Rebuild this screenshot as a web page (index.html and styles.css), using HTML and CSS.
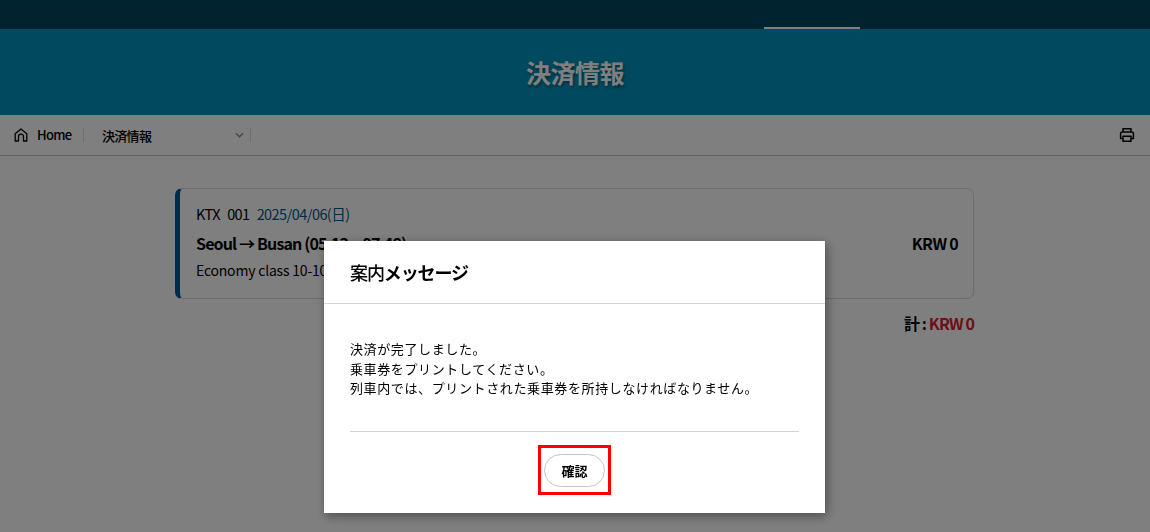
FILE: index.html
```html
<!DOCTYPE html>
<html lang="ja">
<head>
<meta charset="utf-8">
<title>決済情報</title>
<link rel="stylesheet" href="styles.css">
</head>
<body>
<header class="topbar"><span class="topbar-active"></span></header>
<section class="band"><h1 class="band-title">決済情報</h1></section>
<nav class="crumbs">
  <svg class="icon-home" viewBox="0 0 16 16" width="16" height="16" aria-hidden="true"><path d="M2.2 14V6.8L8 2l5.8 4.8V14h-3.3V9.6a2.5 2.5 0 0 0-5 0V14z" fill="none" stroke="#000" stroke-width="1.3" stroke-linejoin="round"/></svg>
  <span class="crumb-home">Home</span>
  <span class="crumb-sep"></span>
  <span class="crumb-select">決済情報<svg class="icon-chevron" viewBox="0 0 10 6" width="9" height="6" aria-hidden="true"><path d="M1 1l4 4 4-4" fill="none" stroke="#888" stroke-width="1.4"/></svg></span>
  <span class="crumb-sep"></span>
  <svg class="icon-print" viewBox="0 0 16 16" width="16" height="16" aria-hidden="true"><path d="M4 5V1.7h8V5M4 11.5H1.6V6.5a1.5 1.5 0 0 1 1.5-1.5h9.8a1.5 1.5 0 0 1 1.5 1.5v5H12M4 9.3h8v5H4z" fill="none" stroke="#000" stroke-width="1.5" stroke-linejoin="round"/></svg>
</nav>
<main class="content">
  <article class="ticket">
    <div class="ticket-info">
      <p class="ticket-meta"><span>KTX</span><span>001</span><span class="ticket-date">2025/04/06(日)</span></p>
      <p class="ticket-route">Seoul → Busan (05:13 ~ 07:48)</p>
      <p class="ticket-seat">Economy class 10-10A</p>
    </div>
    <strong class="ticket-price">KRW 0</strong>
  </article>
  <p class="total">計 : <span class="total-value">KRW 0</span></p>
</main>
<div class="overlay"></div>
<div class="modal">
  <h2 class="modal-title"><span class="modal-title-kanji">案内</span>メッセージ</h2>
  <div class="modal-body">
    <p class="modal-text">決済が完了しました。<br>乗車券をプリントしてください。<br>列車内では、プリントされた乗車券を所持しなければなりません。</p>
    <div class="modal-actions">
      <div class="highlight"><button class="confirm" type="button">確認</button></div>
    </div>
  </div>
</div>
</body>
</html>
```

FILE: styles.css
```css
* { box-sizing: border-box; }
html, body { margin: 0; height: 532px; overflow: hidden; }
body { background: #fff; color: #000; font-family: "Noto Sans CJK KR", "Noto Sans CJK JP", "Noto Sans", sans-serif; }
p, h1, h2 { margin: 0; }

.topbar { height: 29px; background: #00475f; display: flex; padding-left: 764px; align-items: flex-end; }
.topbar-active { width: 96px; height: 2px; background: #fff; }
.band { height: 86px; background: #0093bf; display: flex; align-items: center; justify-content: center; }
.band-title { color: #fff; font-size: 25px; font-weight: 700; line-height: 1; margin-top: 0; letter-spacing: -0.45px; text-shadow: 1px 2px 3px rgba(0,0,0,.4); }

.crumbs { height: 41px; border-bottom: 1px solid #c4c4c4; display: flex; align-items: center; padding: 0 15px 0 13px; font-size: 13px; letter-spacing: -0.7px; }
.icon-home { flex: none; width: 16px; height: 16px; }
.crumb-home { margin-left: 8px; width: 46px; font-weight: 500; margin-top: -1px; }
.crumb-sep { width: 1px; height: 14px; background: #ddd; }
.crumb-select { width: 166px; padding-left: 18px; padding-right: 6px; display: flex; justify-content: space-between; align-items: center; font-weight: 500; }
.icon-print { margin-left: auto; }

.content { width: 799px; margin-left: 175px; padding-top: 32px; }
.ticket { height: 111px; border: 1px solid #d9d9d9; border-left: 5px solid #00599d; border-radius: 7px; padding: 0 15px 4px 16px; display: flex; justify-content: space-between; align-items: center; }
.ticket-meta { display: flex; gap: 7px; font-size: 14.5px; line-height: 20px; letter-spacing: -0.55px; }
.ticket-date { color: #00588f; }
.ticket-route { font-size: 16px; font-weight: 700; line-height: 24px; margin-top: 7px; letter-spacing: -0.85px; }
.ticket-seat { font-size: 14px; line-height: 20px; margin-top: 5px; letter-spacing: -0.2px; }
.ticket-price { font-size: 16px; letter-spacing: -0.7px; margin-top: 3px; }
.total { text-align: right; margin-top: 12px; font-size: 16px; line-height: 24px; font-weight: 700; letter-spacing: -0.9px; }
.total-value { color: #d7222a; }

.overlay { position: fixed; inset: 0; background: rgba(0,0,0,.5); }
.modal { position: fixed; left: 324px; top: 241px; width: 501px; height: 272px; background: #fff; box-shadow: 2px 3px 10px rgba(0,0,0,.4); }
.modal-title { height: 63px; border-bottom: 1px solid #d5d5d5; padding: 0 26px; font-size: 18px; font-weight: 700; line-height: 62px; letter-spacing: -1.1px; }
.modal-title-kanji { font-weight: 500; }
.modal-body { padding: 0 26px; }
.modal-text { padding-top: 35px; height: 128px; border-bottom: 1px solid #d5d5d5; font-family: "Noto Sans CJK JP", sans-serif; font-size: 13px; line-height: 19.5px; letter-spacing: .62px; font-weight: 400; }
.modal-actions { display: flex; justify-content: center; padding-top: 13px; }
.highlight { border: 3px solid #f00; padding: 6px 3px 5px; }
.confirm { display: block; width: 61px; height: 33px; border: 1px solid #c4c4c4; border-radius: 17px; background: #fff; color: #000; padding: 0; font: 700 13px "Noto Sans CJK JP", sans-serif; }
```
